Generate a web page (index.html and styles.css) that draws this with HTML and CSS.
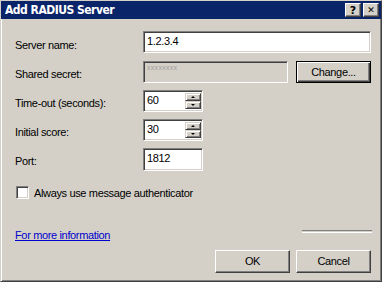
FILE: index.html
```html
<!DOCTYPE html>
<html lang="en">
<head>
  <meta charset="UTF-8" />
  <title>Add RADIUS Server</title>
  <link rel="stylesheet" href="styles.css">
</head>
<body>
  <div class="window">
    <!-- заголовок окна -->
    <div class="titlebar">
      <span class="title">Add RADIUS Server</span>
      <div class="title-buttons">
        <span class="tbtn">?</span>
        <span class="tbtn close">&#x2715;</span>
      </div>
    </div>

    <!-- поля формы -->
    <div class="form">
      <label class="lbl" for="serverName">Server name:</label>
      <input class="field wide" id="serverName" type="text" value="1.2.3.4">

      <label class="lbl">Shared secret:</label>
      <div class="field disabled"><span class="secret">xxxxxxxx</span></div>
      <span class="button default">Change...</span>

      <label class="lbl" for="timeout">Time-out (seconds):</label>
      <div class="spin">
        <input class="spin-input" id="timeout" type="text" value="60">
        <div class="spin-btns">
          <span class="spin-btn"><span class="arrow up"></span></span>
          <span class="spin-btn"><span class="arrow down"></span></span>
        </div>
      </div>

      <label class="lbl" for="score">Initial score:</label>
      <div class="spin">
        <input class="spin-input" id="score" type="text" value="30">
        <div class="spin-btns">
          <span class="spin-btn"><span class="arrow up"></span></span>
          <span class="spin-btn"><span class="arrow down"></span></span>
        </div>
      </div>

      <label class="lbl" for="port">Port:</label>
      <input class="field port" id="port" type="text" value="1812">
    </div>

    <label class="check-row">
      <span class="checkbox"></span>
      <span>Always use message authenticator</span>
    </label>

    <div class="info-row">
      <a class="link" href="#">For more information</a>
      <span class="separator"></span>
    </div>

    <div class="button-block">
      <span class="button">OK</span>
      <span class="button">Cancel</span>
    </div>
  </div>
</body>
</html>
```

FILE: styles.css
```css
/* Классический диалог Windows */
body {
  margin: 0;
  padding: 0;
  background-color: #d4d0c8;
  font-family: "Liberation Sans", Arial, sans-serif;
  font-size: 11px;
  letter-spacing: -0.35px;
  color: #000;
}
.window {
  width: 382px;
  height: 282px;
  box-sizing: border-box;
  background-color: #d4d0c8;
  border: 1px solid;
  border-color: #d4d0c8 #404040 #404040 #d4d0c8;
  box-shadow: inset 1px 1px #fff, inset -1px -1px #808080;
  overflow: hidden;
}
/* Заголовок */
.titlebar {
  height: 18px;
  background-color: #0a246a;
  display: flex;
  align-items: center;
  justify-content: space-between;
  padding: 0 2px 0 4px;
}
.title {
  color: #fff;
  font-family: "DejaVu Sans Condensed", "DejaVu Sans", sans-serif;
  font-weight: bold;
  font-size: 12px;
  letter-spacing: -0.5px;
}
.title-buttons {
  display: flex;
  gap: 2px;
}
.tbtn {
  width: 16px;
  height: 14px;
  box-sizing: border-box;
  background-color: #d4d0c8;
  border: 1px solid;
  border-color: #fff #404040 #404040 #fff;
  box-shadow: inset -1px -1px #808080;
  display: flex;
  align-items: center;
  justify-content: center;
  font-family: "DejaVu Sans", sans-serif;
  font-weight: bold;
  font-size: 11px;
  letter-spacing: 0;
  line-height: 1;
}
.tbtn.close {
  font-size: 9px;
}
/* Форма */
.form {
  display: grid;
  grid-template-columns: 120px 145px 75px;
  grid-template-rows: 23px 22px 22px 22px 22px;
  column-gap: 8px;
  row-gap: 7px;
  padding: 12px 0 0 14px;
}
.lbl {
  grid-column: 1;
  padding-top: 4px;
  align-self: center;
}
.field {
  height: 22px;
  box-sizing: border-box;
  border: 1px solid;
  border-color: #808080 #fff #fff #808080;
  box-shadow: inset 1px 1px #404040, inset -1px -1px #d4d0c8;
  background-color: #fff;
  font-family: inherit;
  font-size: 11px;
  letter-spacing: -0.35px;
  padding: 0 3px 3px;
  margin: 0;
  outline: none;
}
.field.wide {
  grid-column: 2 / 4;
  width: 228px;
}
.field.disabled {
  background-color: #d4d0c8;
  padding: 2px 3px;
}
.secret {
  display: block;
  font-size: 7px;
  letter-spacing: 0.3px;
  line-height: 7px;
  color: #a0a0a0;
}
.field.port {
  grid-column: 2;
  width: 60px;
  height: 23px;
}
/* Счётчик */
.spin {
  grid-column: 2;
  width: 60px;
  height: 22px;
  box-sizing: border-box;
  border: 1px solid;
  border-color: #808080 #fff #fff #808080;
  box-shadow: inset 1px 1px #404040, inset -1px -1px #d4d0c8;
  background-color: #fff;
  display: flex;
  padding: 1px;
}
.spin-input {
  flex: 1;
  min-width: 0;
  border: none;
  outline: none;
  padding: 0 2px 3px;
  margin: 0;
  font-family: inherit;
  font-size: 11px;
  letter-spacing: -0.35px;
  background: transparent;
}
.spin-btns {
  width: 16px;
  display: flex;
  flex-direction: column;
  padding: 1px 0;
}
.spin-btn {
  flex: 1;
  box-sizing: border-box;
  background-color: #d4d0c8;
  border: 1px solid;
  border-color: #d4d0c8 #404040 #404040 #d4d0c8;
  box-shadow: inset 1px 1px #fff, inset -1px -1px #808080;
  display: flex;
  align-items: center;
  justify-content: center;
}
.arrow {
  width: 0;
  height: 0;
  border-left: 2px solid transparent;
  border-right: 2px solid transparent;
}
.arrow.up {
  border-bottom: 2px solid #000;
}
.arrow.down {
  border-top: 2px solid #000;
}
/* Кнопки */
.button {
  width: 75px;
  height: 23px;
  box-sizing: border-box;
  background-color: #d4d0c8;
  border: 1px solid;
  border-color: #fff #404040 #404040 #fff;
  box-shadow: inset -1px -1px #808080;
  display: inline-flex;
  align-items: center;
  justify-content: center;
  padding-bottom: 1px;
  cursor: pointer;
}
.button.default {
  height: 22px;
  border-color: #000;
  box-shadow: inset 1px 1px #fff, inset -1px -1px #404040, inset -2px -2px #808080;
}
/* Флажок */
.check-row {
  display: flex;
  align-items: center;
  gap: 5px;
  margin: 16px 0 0 15px;
  height: 13px;
}
.checkbox {
  width: 13px;
  height: 13px;
  box-sizing: border-box;
  background-color: #fff;
  border: 1px solid;
  border-color: #808080 #fff #fff #808080;
  box-shadow: inset 1px 1px #404040, inset -1px -1px #d4d0c8;
}
/* Ссылка и разделитель */
.info-row {
  display: flex;
  justify-content: space-between;
  align-items: flex-start;
  margin: 31px 9px 0 14px;
}
.link {
  color: #0000cc;
  text-decoration: underline;
  margin-top: -1px;
}
.separator {
  width: 70px;
  height: 1px;
  border-top: 1px solid #808080;
  border-bottom: 1px solid #fff;
  margin-top: 0;
}
.button-block {
  display: flex;
  justify-content: flex-end;
  gap: 6px;
  margin: 9px 10px 0 0;
}
```
